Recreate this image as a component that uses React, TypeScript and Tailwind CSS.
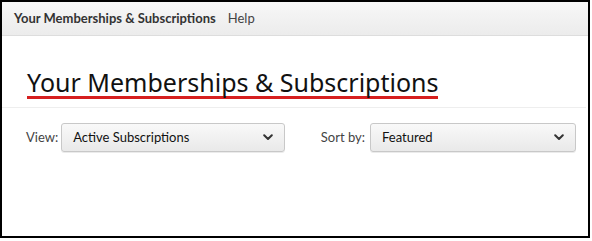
import React, { useState } from 'react';

const Chevron: React.FC = () => (
    <svg width="10" height="7" viewBox="0 0 10 7" className="shrink-0">
        <path d="M1.2 1.2 L5 5 L8.8 1.2" fill="none" stroke="#333" strokeWidth="2" strokeLinecap="round" strokeLinejoin="round" />
    </svg>
);

const App: React.FC = () => {
    const [view] = useState('Active Subscriptions');
    const [sort] = useState('Featured');

    return (
        <div className="w-[592px] h-[241px] bg-white" style={{ fontFamily: '"Noto Sans", "Open Sans", sans-serif' }}>
            <div className="w-[590px] h-[238px] border-2 border-black flex flex-col overflow-hidden">
                <div className="h-[34px] flex items-center gap-[12px] pl-[12px] bg-gradient-to-b from-[#f7f7f7] to-[#ececec] border-b border-[#dddddd]" style={{ fontFamily: 'Lato, "Noto Sans", sans-serif' }}>
                    <span className="text-[13px] font-bold text-[#333]">Your Memberships &amp; Subscriptions</span>
                    <span className="text-[13px] text-[#444]">Help</span>
                </div>

                <div className="pl-[25px] pt-[33px] border-b border-[#eeeeee] mr-[2px]">
                    <h1 className="inline-block text-[25px] leading-[26px] text-[#111] border-b-[3px] border-[#d61f1f] pb-[1px]">
                        Your Memberships &amp; Subscriptions
                    </h1>
                    <div className="h-[8px]" />
                </div>

                <div className="flex items-center justify-between pl-[24px] pr-[12px] pt-[15px]" style={{ fontFamily: 'Lato, "Noto Sans", sans-serif' }}>
                    <div className="flex items-center gap-[3px]">
                        <span className="text-[13px] text-[#444]">View:</span>
                        <div className="w-[224px] h-[29px] flex items-center justify-between px-[11px] rounded-[3px] border border-[#c8c8c8] bg-gradient-to-b from-[#f9f9f9] to-[#e9e9e9] shadow-[0_1px_0_rgba(0,0,0,0.08)]">
                            <span className="text-[13px] text-[#111]">{view}</span>
                            <Chevron />
                        </div>
                    </div>
                    <div className="flex items-center gap-[5px]">
                        <span className="text-[13px] text-[#444]">Sort by:</span>
                        <div className="w-[206px] h-[29px] flex items-center justify-between px-[11px] rounded-[3px] border border-[#c8c8c8] bg-gradient-to-b from-[#f9f9f9] to-[#e9e9e9] shadow-[0_1px_0_rgba(0,0,0,0.08)]">
                            <span className="text-[13px] text-[#111]">{sort}</span>
                            <Chevron />
                        </div>
                    </div>
                </div>
            </div>
        </div>
    );
};

export default App;
